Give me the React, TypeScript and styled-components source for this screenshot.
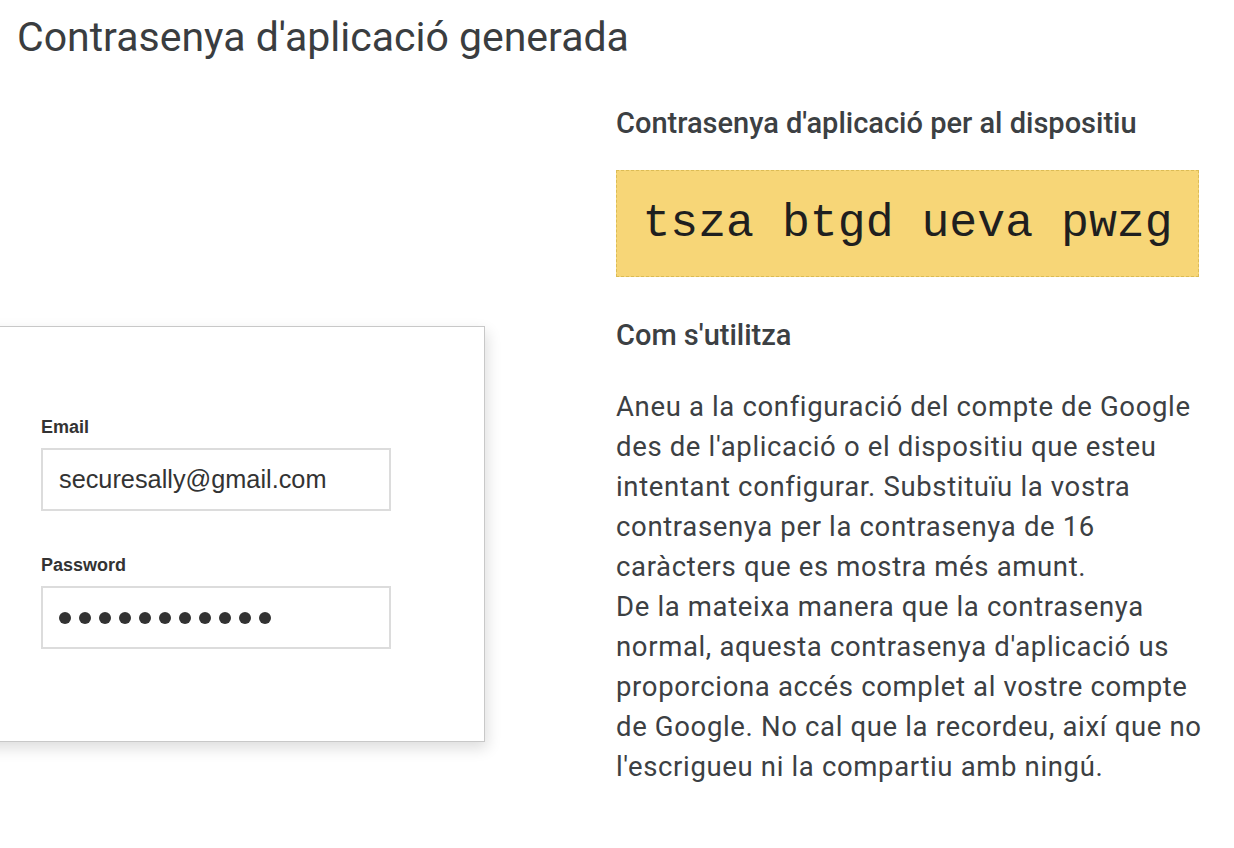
import React from 'react';
import styled, { createGlobalStyle } from 'styled-components';

const GlobalStyle = createGlobalStyle`
  html, body {
    margin: 0;
    padding: 0;
    background: #ffffff;
  }
  body {
    font-family: Roboto, "Liberation Sans", sans-serif;
    color: #3c4043;
    overflow: hidden;
  }
`;

const Page = styled.div`
  width: 1234px;
  height: 848px;
  overflow: hidden;
`;

const Title = styled.h1`
  margin: 0;
  padding: 12px 0 0 17px;
  font-size: 41px;
  line-height: 50px;
  font-weight: 400;
  color: #3a3d40;
`;

const Columns = styled.div`
  display: grid;
  grid-template-columns: 616px 583px;
`;

const LeftColumn = styled.div`
  padding-top: 264px;
`;

const LoginCard = styled.div`
  margin-left: -20px;
  width: 505px;
  height: 416px;
  box-sizing: border-box;
  background: #ffffff;
  border: 1px solid #c8c8c8;
  box-shadow: 2px 6px 14px rgba(0, 0, 0, 0.14);
  padding: 90px 0 0 60px;
  font-family: "Liberation Sans", Arial, sans-serif;
  color: #333333;
`;

const Field = styled.div`
  display: flex;
  flex-direction: column;
  gap: 11px;
  margin-bottom: 44px;
`;

const Label = styled.div`
  font-size: 18px;
  line-height: 20px;
  font-weight: 700;
  color: #333333;
`;

const InputBox = styled.div`
  width: 350px;
  height: 63px;
  box-sizing: border-box;
  border: 2px solid #dcdcdc;
  display: flex;
  align-items: center;
  padding-left: 16px;
  font-size: 25.3px;
  color: #333333;
`;

const Dots = styled.div`
  display: flex;
  gap: 8px;
`;

const Dot = styled.span`
  width: 12px;
  height: 12px;
  border-radius: 50%;
  background: #333333;
`;

const RightColumn = styled.div`
  padding-top: 44px;
`;

const Heading = styled.h2`
  margin: 0;
  font-size: 29px;
  line-height: 34px;
  font-weight: 500;
  color: #3c4043;
`;

const PasswordBox = styled.div`
  margin: 30px 0 41px;
  height: 107px;
  box-sizing: border-box;
  background: #f7d677;
  border: 1px dashed #dcbc55;
  display: flex;
  align-items: center;
  justify-content: center;
  font-family: "Liberation Mono", "Courier New", monospace;
  font-size: 46.5px;
  color: #1f1f1f;
`;

const Body = styled.p`
  margin: 35px 0 0;
  font-size: 27.5px;
  letter-spacing: 0.65px;
  line-height: 40px;
  color: #3c4043;
`;

const Line = styled.span`
  display: block;
  white-space: nowrap;
`;

const bodyLines = [
  'Aneu a la configuració del compte de Google',
  "des de l'aplicació o el dispositiu que esteu",
  'intentant configurar. Substituïu la vostra',
  'contrasenya per la contrasenya de 16',
  'caràcters que es mostra més amunt.',
  'De la mateixa manera que la contrasenya',
  "normal, aquesta contrasenya d'aplicació us",
  'proporciona accés complet al vostre compte',
  'de Google. No cal que la recordeu, així que no',
  "l'escrigueu ni la compartiu amb ningú.",
];

export default function App() {
  return (
    <Page>
      <GlobalStyle />
      <Title>Contrasenya d'aplicació generada</Title>
      <Columns>
        <LeftColumn>
          <LoginCard>
            <Field>
              <Label>Email</Label>
              <InputBox>securesally@gmail.com</InputBox>
            </Field>
            <Field>
              <Label>Password</Label>
              <InputBox>
                <Dots>
                  {Array.from({ length: 11 }).map((_, i) => (
                    <Dot key={i} />
                  ))}
                </Dots>
              </InputBox>
            </Field>
          </LoginCard>
        </LeftColumn>
        <RightColumn>
          <Heading>Contrasenya d'aplicació per al dispositiu</Heading>
          <PasswordBox>tsza btgd ueva pwzg</PasswordBox>
          <Heading>Com s'utilitza</Heading>
          <Body>
            {bodyLines.map((line) => (
              <Line key={line}>{line}</Line>
            ))}
          </Body>
        </RightColumn>
      </Columns>
    </Page>
  );
}
